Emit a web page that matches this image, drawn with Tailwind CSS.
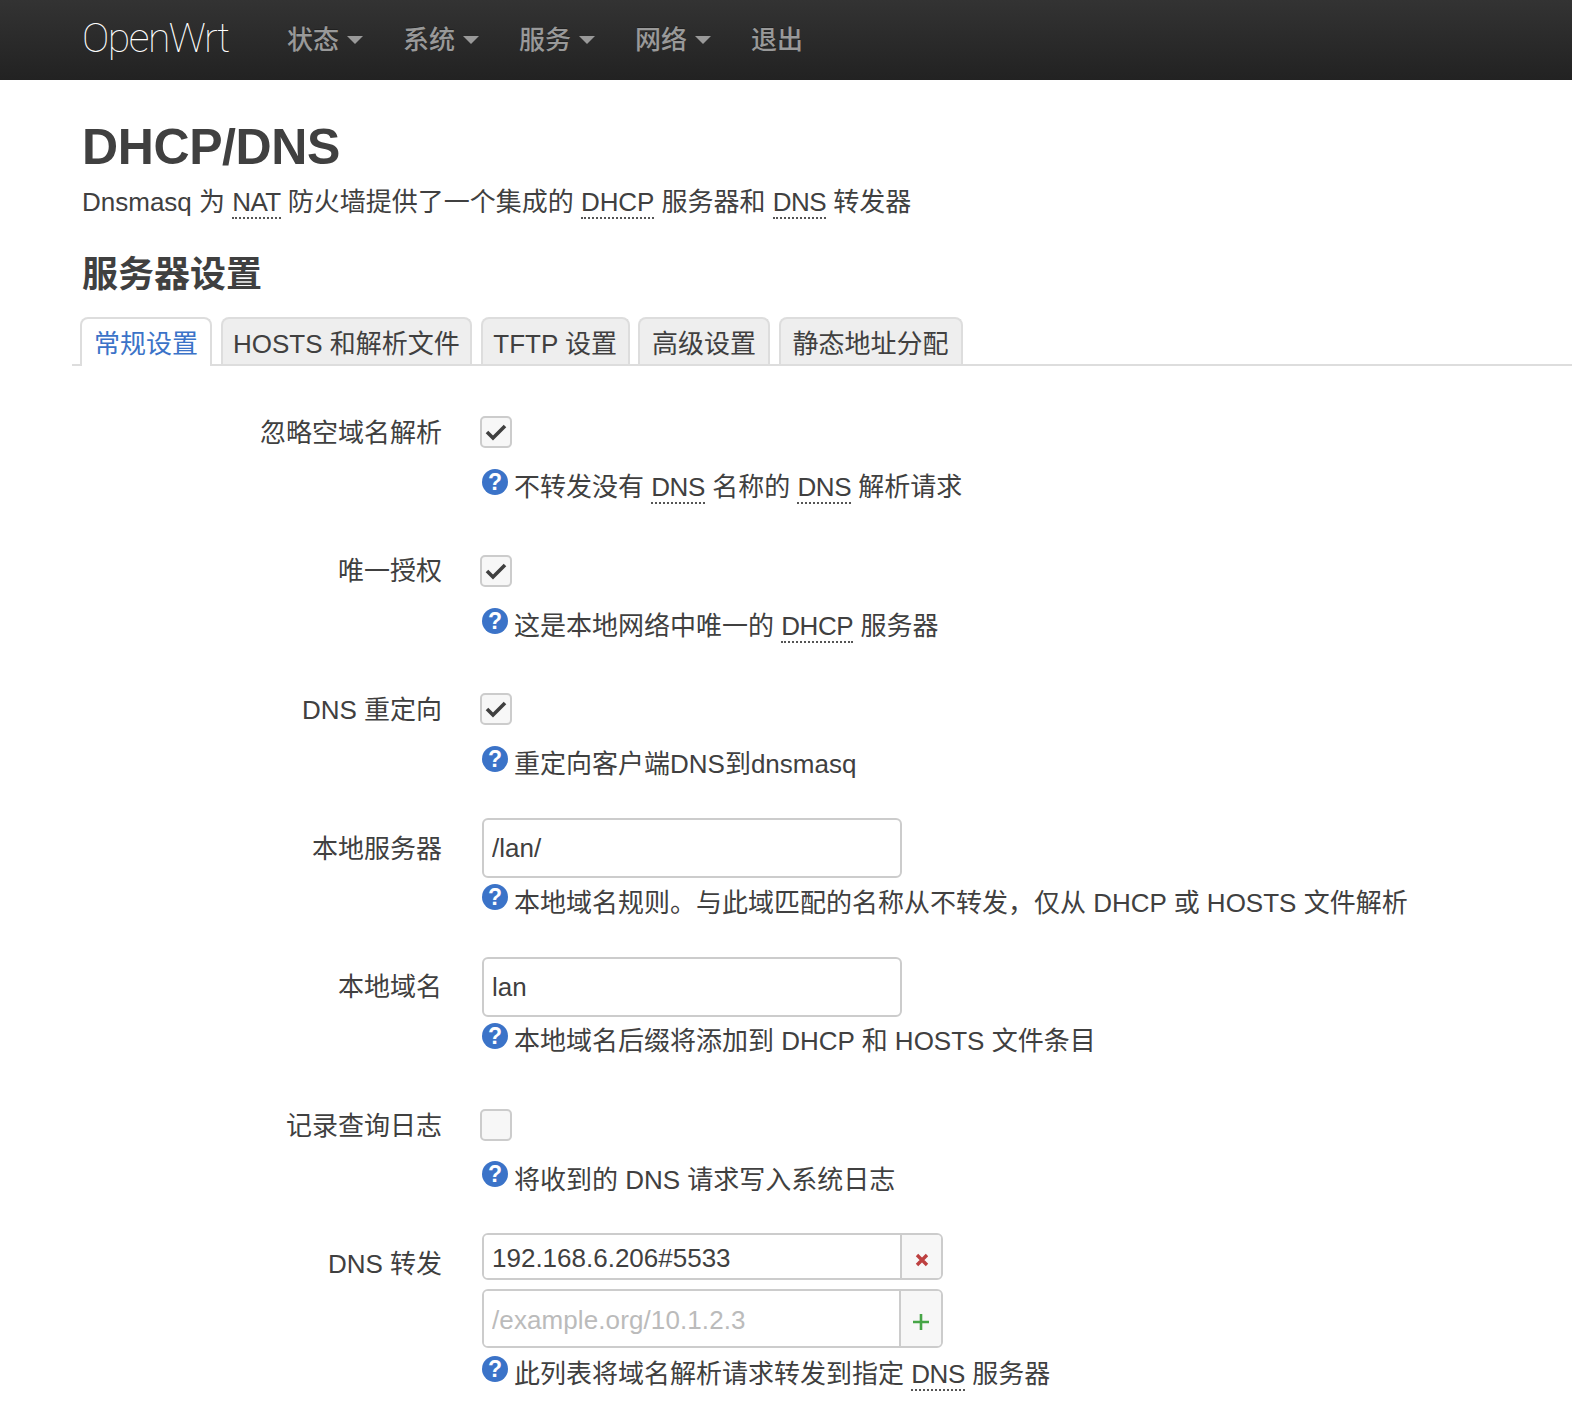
<!DOCTYPE html>
<html lang="zh-CN">
<head>
    <meta charset="UTF-8">
    <title>OpenWrt - DHCP/DNS</title>
    <script src="https://cdn.jsdelivr.net/npm/@tailwindcss/browser@4"></script>
</head>
<body class="bg-white text-[#404040] text-[26px] leading-[36px] font-['Liberation_Sans','Noto_Sans_CJK_SC',sans-serif] overflow-hidden">

<!-- Top bar -->
<nav class="h-[80px] bg-linear-to-b from-[#333333] to-[#222222] flex items-center pl-[82px]">
    <span class="w-[205px] text-[41px] leading-[40px] text-white font-['Roboto',sans-serif] font-thin tracking-[-1.5px] -mt-[4px]">OpenWrt</span>
    <div class="flex items-center text-[26px] font-medium text-[#999999] [text-shadow:0_-1px_0_rgba(0,0,0,0.25)]">
        <span>状态</span><span class="ml-[8px] mr-[40px] border-x-[8px] border-x-transparent border-t-[8px] border-t-[#999999]"></span>
        <span>系统</span><span class="ml-[8px] mr-[40px] border-x-[8px] border-x-transparent border-t-[8px] border-t-[#999999]"></span>
        <span>服务</span><span class="ml-[8px] mr-[40px] border-x-[8px] border-x-transparent border-t-[8px] border-t-[#999999]"></span>
        <span>网络</span><span class="ml-[8px] mr-[40px] border-x-[8px] border-x-transparent border-t-[8px] border-t-[#999999]"></span>
        <span>退出</span>
    </div>
</nav>

<main class="pl-[82px]">
    <h1 class="mt-[37px] text-[50px] leading-[60px] font-bold tracking-[-0.4px]">DHCP/DNS</h1>
    <p class="mt-[7px]">Dnsmasq 为 <span class="tracking-[-0.6px] border-b-2 border-dotted border-[#555555]">NAT</span> 防火墙提供了一个集成的 <span class="tracking-[-0.1px] border-b-2 border-dotted border-[#555555]">DHCP</span> 服务器和 <span class="tracking-[-0.5px] border-b-2 border-dotted border-[#555555]">DNS</span> 转发器</p>
    <h2 class="mt-[33px] text-[36px] leading-[44px] font-bold">服务器设置</h2>

    <!-- Tabs -->
    <div class="mt-[20px] -ml-[10px] pl-[8px] flex gap-[8.5px] h-[49px] border-b-2 border-[#dddddd]">
        <span class="h-[49px] px-[12px] pt-[6.5px] bg-white text-[#3b73c8] border-2 border-b-0 border-[#dddddd] rounded-t-[8px]">常规设置</span>
        <span class="h-[47px] px-[10.5px] pt-[6.5px] bg-[#eeeeee] border-2 border-b-0 border-[#dddddd] rounded-t-[8px]">HOSTS 和解析文件</span>
        <span class="h-[47px] px-[10.5px] pt-[6.5px] bg-[#eeeeee] border-2 border-b-0 border-[#dddddd] rounded-t-[8px]">TFTP 设置</span>
        <span class="h-[47px] px-[12px] pt-[6.5px] bg-[#eeeeee] border-2 border-b-0 border-[#dddddd] rounded-t-[8px]">高级设置</span>
        <span class="h-[47px] px-[12px] pt-[6.5px] bg-[#eeeeee] border-2 border-b-0 border-[#dddddd] rounded-t-[8px]">静态地址分配</span>
    </div>

    <!-- Form rows -->
    <div class="mt-[37.4px]">
        <div class="h-[138.33px] flex">
            <label class="w-[360px] pt-[12px] text-right">忽略空域名解析</label>
            <div class="ml-[38px]">
                <div class="mt-[13px] w-[32px] h-[32px] flex items-center justify-center bg-[#f7f7f7] border-2 border-[#cccccc] rounded-[5px]">
                    <svg class="w-[22px] h-[18px]" viewBox="0 0 22 18"><path d="M2 9l6 6L20 3" fill="none" stroke="#404040" stroke-width="3.6"/></svg>
                </div>
                <div class="mt-[21px] ml-[2px] flex">
                    <span class="w-[26px] h-[26px] rounded-full bg-[#3b73c8] text-white text-[23px] leading-[26px] font-bold text-center">?</span>
                    <span class="ml-[6px] -mt-[2px] pt-[2px]">不转发没有 <span class="tracking-[-0.4px] border-b-2 border-dotted border-[#555555]">DNS</span> 名称的 <span class="tracking-[-0.4px] border-b-2 border-dotted border-[#555555]">DNS</span> 解析请求</span>
                </div>
            </div>
        </div>

        <div class="h-[138.33px] flex">
            <label class="w-[360px] pt-[11px] text-right">唯一授权</label>
            <div class="ml-[38px]">
                <div class="mt-[13px] w-[32px] h-[32px] flex items-center justify-center bg-[#f7f7f7] border-2 border-[#cccccc] rounded-[5px]">
                    <svg class="w-[22px] h-[18px]" viewBox="0 0 22 18"><path d="M2 9l6 6L20 3" fill="none" stroke="#404040" stroke-width="3.6"/></svg>
                </div>
                <div class="mt-[21px] ml-[2px] flex">
                    <span class="w-[26px] h-[26px] rounded-full bg-[#3b73c8] text-white text-[23px] leading-[26px] font-bold text-center">?</span>
                    <span class="ml-[6px] -mt-[2px] pt-[2px]">这是本地网络中唯一的 <span class="tracking-[-0.4px] border-b-2 border-dotted border-[#555555]">DHCP</span> 服务器</span>
                </div>
            </div>
        </div>

        <div class="h-[138.33px] flex">
            <label class="w-[360px] pt-[12px] text-right">DNS 重定向</label>
            <div class="ml-[38px]">
                <div class="mt-[13px] w-[32px] h-[32px] flex items-center justify-center bg-[#f7f7f7] border-2 border-[#cccccc] rounded-[5px]">
                    <svg class="w-[22px] h-[18px]" viewBox="0 0 22 18"><path d="M2 9l6 6L20 3" fill="none" stroke="#404040" stroke-width="3.6"/></svg>
                </div>
                <div class="mt-[21px] ml-[2px] flex">
                    <span class="w-[26px] h-[26px] rounded-full bg-[#3b73c8] text-white text-[23px] leading-[26px] font-bold text-center">?</span>
                    <span class="ml-[6px] -mt-[2px] pt-[2px]">重定向客户端DNS到dnsmasq</span>
                </div>
            </div>
        </div>

        <div class="h-[138.33px] flex">
            <label class="w-[360px] pt-[13px] text-right">本地服务器</label>
            <div class="ml-[40px]">
                <input value="/lan/" class="block w-[420px] h-[60px] px-[8px] pt-[1px] bg-white border-2 border-[#cccccc] rounded-[6px]">
                <div class="mt-[6px] flex">
                    <span class="w-[26px] h-[26px] rounded-full bg-[#3b73c8] text-white text-[23px] leading-[26px] font-bold text-center">?</span>
                    <span class="ml-[6px] -mt-[1px] pt-[2px] whitespace-nowrap">本地域名规则。与此域匹配的名称从不转发，仅从 DHCP 或 HOSTS 文件解析</span>
                </div>
            </div>
        </div>

        <div class="h-[138.33px] flex">
            <label class="w-[360px] pt-[12px] text-right">本地域名</label>
            <div class="ml-[40px]">
                <input value="lan" class="block w-[420px] h-[60px] px-[8px] pt-[1px] bg-white border-2 border-[#cccccc] rounded-[6px]">
                <div class="mt-[6px] flex">
                    <span class="w-[26px] h-[26px] rounded-full bg-[#3b73c8] text-white text-[23px] leading-[26px] font-bold text-center">?</span>
                    <span class="ml-[6px] -mt-[2px] pt-[2px]">本地域名后缀将添加到 DHCP 和 HOSTS 文件条目</span>
                </div>
            </div>
        </div>

        <div class="h-[138.33px] flex">
            <label class="w-[360px] pt-[13px] text-right">记录查询日志</label>
            <div class="ml-[38px]">
                <div class="mt-[14px] w-[32px] h-[32px] bg-[#f7f7f7] border-2 border-[#cccccc] rounded-[5px]"></div>
                <div class="mt-[20px] ml-[2px] flex">
                    <span class="w-[26px] h-[26px] rounded-full bg-[#3b73c8] text-white text-[23px] leading-[26px] font-bold text-center">?</span>
                    <span class="ml-[6px] -mt-[1px] pt-[2px]">将收到的 DNS 请求写入系统日志</span>
                </div>
            </div>
        </div>

        <div class="flex">
            <label class="w-[360px] pt-[13px] text-right">DNS 转发</label>
            <div class="ml-[40px]">
                <div class="flex w-[461px] h-[47px] border-2 border-[#cccccc] rounded-[6px] overflow-hidden">
                    <input value="192.168.6.206#5533" class="w-[416px] min-w-0 px-[8px] pt-[2px] bg-white">
                    <span class="flex-1 flex items-center justify-center bg-[#f7f7f7] border-l-2 border-[#cccccc]">
                        <svg class="w-[14px] h-[14px] mt-[7px]" viewBox="0 0 14 14"><path d="M2 2l10 10M12 2L2 12" fill="none" stroke="#bd4040" stroke-width="3.4"/></svg>
                    </span>
                </div>
                <div class="mt-[9px] flex w-[461px] h-[59px] border-2 border-[#cccccc] rounded-[6px] overflow-hidden">
                    <input placeholder="/example.org/10.1.2.3" class="w-[415px] min-w-0 px-[8px] pt-[2px] tracking-[0.1px] bg-white placeholder:text-[#bbbbbb]">
                    <span class="flex-1 flex items-center justify-center bg-[#f7f7f7] border-l-2 border-[#cccccc]">
                        <svg class="w-[16px] h-[16px] mt-[7px]" viewBox="0 0 16 16"><path d="M8 0v16M0 8h16" fill="none" stroke="#46a546" stroke-width="2.6"/></svg>
                    </span>
                </div>
                <div class="mt-[8px] flex">
                    <span class="w-[26px] h-[26px] rounded-full bg-[#3b73c8] text-white text-[23px] leading-[26px] font-bold text-center">?</span>
                    <span class="ml-[6px] -mt-[2px] pt-[2px] whitespace-nowrap">此列表将域名解析请求转发到指定 <span class="tracking-[-0.4px] border-b-2 border-dotted border-[#555555]">DNS</span> 服务器</span>
                </div>
            </div>
        </div>
    </div>
</main>

</body>
</html>
